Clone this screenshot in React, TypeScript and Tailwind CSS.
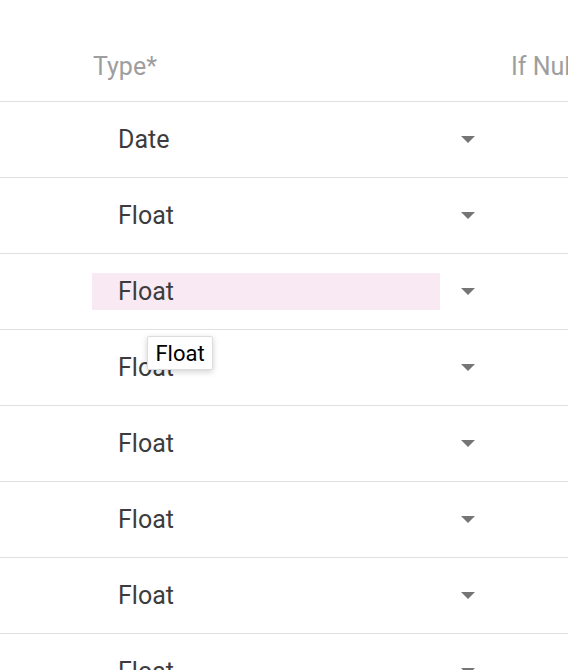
import React from 'react';

const rows = ['Date', 'Float', 'Float', 'Float', 'Float', 'Float', 'Float', 'Float'];

function Caret() {
  return (
    <svg width="14" height="7" viewBox="0 0 14 7" className="shrink-0">
      <path d="M0 0h14L7 7z" fill="#757575" />
    </svg>
  );
}

export default function App() {
  return (
    <div
      className="w-[568px] h-[670px] overflow-hidden bg-white"
      style={{ fontFamily: 'Roboto, "Liberation Sans", sans-serif' }}
    >
      <div className="w-[700px]">
        <div className="flex h-[102px] items-end border-b border-[#e0e0e0] pb-[18px] text-[25px] leading-[32px] text-[#9e9e9e]">
          <div className="w-[93px] shrink-0" />
          <div className="w-[418px] shrink-0">Type*</div>
          <div>If Null</div>
        </div>
        {rows.map((r, i) => (
          <div key={i} className="flex h-[76px] items-center border-b border-[#e0e0e0]">
            <div className="w-[92px] shrink-0" />
            <div className="relative flex w-[384px] shrink-0 items-center">
              <div
                className={`flex h-[37px] w-[348px] items-center pl-[26px] text-[25px] text-[#3c3c3c] ${
                  i === 2 ? 'bg-[#f8e9f3]' : ''
                }`}
              >
                {r}
              </div>
              <div className="ml-[21px]">
                <Caret />
              </div>
              {i === 3 && (
                <div className="absolute left-[55px] top-[-13px] flex h-[34px] w-[66px] items-center justify-center rounded-[2px] border border-[#dcdcdc] bg-white text-[22px] text-black shadow-[0_2px_6px_rgba(0,0,0,0.18)]">
                  Float
                </div>
              )}
            </div>
          </div>
        ))}
      </div>
    </div>
  );
}
